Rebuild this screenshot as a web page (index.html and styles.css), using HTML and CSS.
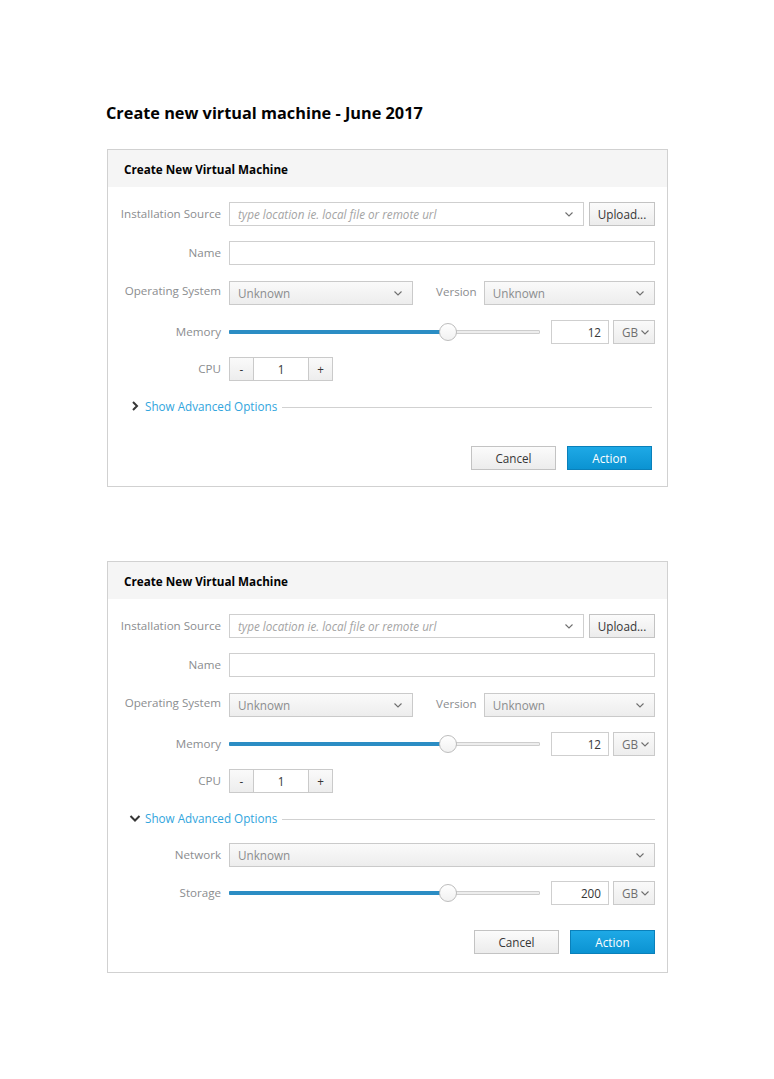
FILE: index.html
```html
<!DOCTYPE html>
<html lang="en">
<head>
<meta charset="utf-8">
<title>Create new virtual machine</title>
<link rel="stylesheet" href="styles.css">
</head>
<body>
<main class="page">
  <h1 class="page-title">Create new virtual machine - June 2017</h1>

  <section class="card card--collapsed">
    <header class="card-head"><h2 class="card-title">Create New Virtual Machine</h2></header>
    <div class="card-body">
      <div class="form">
        <div class="row">
          <span class="lbl">Installation Source</span>
          <div class="ctl split">
            <div class="field combo"><span class="ph">type location ie. local file or remote url</span><svg class="chev" viewBox="0 0 8 5" width="8" height="5"><polyline points="0.5,0.5 4,4 7.5,0.5"/></svg></div>
            <span class="btn btn-upload">Upload...</span>
          </div>
        </div>
        <div class="row">
          <span class="lbl">Name</span>
          <div class="ctl"><div class="field"></div></div>
        </div>
        <div class="row row-os">
          <span class="lbl lbl-up">Operating System</span>
          <div class="ctl os">
            <div class="select sel-os"><span>Unknown</span><svg class="chev" viewBox="0 0 8 5" width="8" height="5"><polyline points="0.5,0.5 4,4 7.5,0.5"/></svg></div>
            <span class="lbl lbl-version">Version</span>
            <div class="select sel-ver"><span>Unknown</span><svg class="chev" viewBox="0 0 8 5" width="8" height="5"><polyline points="0.5,0.5 4,4 7.5,0.5"/></svg></div>
          </div>
        </div>
        <div class="row">
          <span class="lbl">Memory</span>
          <div class="ctl size">
            <div class="slider"><div class="track"></div><div class="fill" style="width:70%"></div><div class="thumb" style="left:70%"></div></div>
            <div class="field num">12</div>
            <div class="select unit"><span>GB</span><svg class="chev" viewBox="0 0 8 5" width="8" height="5"><polyline points="0.5,0.5 4,4 7.5,0.5"/></svg></div>
          </div>
        </div>
        <div class="row row-cpu">
          <span class="lbl">CPU</span>
          <div class="ctl">
            <div class="spin"><span class="spin-btn">-</span><span class="spin-val">1</span><span class="spin-btn">+</span></div>
          </div>
        </div>
      </div>
      <div class="adv">
        <svg class="adv-icon" viewBox="0 0 12 12" width="12" height="12"><polyline points="4,2 8,6 4,10"/></svg>
        <span class="adv-link">Show Advanced Options</span>
        <span class="adv-line"></span>
      </div>
      <div class="footer">
        <span class="btn btn-cancel">Cancel</span>
        <span class="btn btn-primary">Action</span>
      </div>
    </div>
  </section>

  <section class="card card--expanded">
    <header class="card-head"><h2 class="card-title">Create New Virtual Machine</h2></header>
    <div class="card-body">
      <div class="form">
        <div class="row">
          <span class="lbl">Installation Source</span>
          <div class="ctl split">
            <div class="field combo"><span class="ph">type location ie. local file or remote url</span><svg class="chev" viewBox="0 0 8 5" width="8" height="5"><polyline points="0.5,0.5 4,4 7.5,0.5"/></svg></div>
            <span class="btn btn-upload">Upload...</span>
          </div>
        </div>
        <div class="row">
          <span class="lbl">Name</span>
          <div class="ctl"><div class="field"></div></div>
        </div>
        <div class="row row-os">
          <span class="lbl lbl-up">Operating System</span>
          <div class="ctl os">
            <div class="select sel-os"><span>Unknown</span><svg class="chev" viewBox="0 0 8 5" width="8" height="5"><polyline points="0.5,0.5 4,4 7.5,0.5"/></svg></div>
            <span class="lbl lbl-version">Version</span>
            <div class="select sel-ver"><span>Unknown</span><svg class="chev" viewBox="0 0 8 5" width="8" height="5"><polyline points="0.5,0.5 4,4 7.5,0.5"/></svg></div>
          </div>
        </div>
        <div class="row">
          <span class="lbl">Memory</span>
          <div class="ctl size">
            <div class="slider"><div class="track"></div><div class="fill" style="width:70%"></div><div class="thumb" style="left:70%"></div></div>
            <div class="field num">12</div>
            <div class="select unit"><span>GB</span><svg class="chev" viewBox="0 0 8 5" width="8" height="5"><polyline points="0.5,0.5 4,4 7.5,0.5"/></svg></div>
          </div>
        </div>
        <div class="row row-cpu">
          <span class="lbl">CPU</span>
          <div class="ctl">
            <div class="spin"><span class="spin-btn">-</span><span class="spin-val">1</span><span class="spin-btn">+</span></div>
          </div>
        </div>
      </div>
      <div class="adv">
        <svg class="adv-icon" viewBox="0 0 12 12" width="12" height="12"><polyline points="1.5,4 6,8.5 10.5,4"/></svg>
        <span class="adv-link">Show Advanced Options</span>
        <span class="adv-line"></span>
      </div>
      <div class="form form-adv">
        <div class="row">
          <span class="lbl">Network</span>
          <div class="ctl">
            <div class="select"><span>Unknown</span><svg class="chev" viewBox="0 0 8 5" width="8" height="5"><polyline points="0.5,0.5 4,4 7.5,0.5"/></svg></div>
          </div>
        </div>
        <div class="row">
          <span class="lbl">Storage</span>
          <div class="ctl size">
            <div class="slider"><div class="track"></div><div class="fill" style="width:70%"></div><div class="thumb" style="left:70%"></div></div>
            <div class="field num">200</div>
            <div class="select unit"><span>GB</span><svg class="chev" viewBox="0 0 8 5" width="8" height="5"><polyline points="0.5,0.5 4,4 7.5,0.5"/></svg></div>
          </div>
        </div>
      </div>
      <div class="footer">
        <span class="btn btn-cancel">Cancel</span>
        <span class="btn btn-primary">Action</span>
      </div>
    </div>
  </section>
</main>
</body>
</html>
```

FILE: styles.css
```css
* { box-sizing: border-box; }

html, body {
  margin: 0;
  padding: 0;
  background: #ffffff;
}

body {
  font-family: "Open Sans", "Liberation Sans", sans-serif;
  color: #363636;
}

.page {
  padding: 102px 0 40px 106px;
}

.page-title {
  margin: 0 0 25px 0;
  font-size: 16.3px;
  line-height: 22px;
  font-weight: 700;
  color: #030303;
}

.card {
  width: 561px;
  margin-left: 1px;
  border: 1px solid #d1d1d1;
  background: #fff;
}

.card + .card {
  margin-top: 74px;
}

.card-head {
  height: 37px;
  background: #f5f5f5;
  display: flex;
  align-items: center;
  padding: 1px 0 0 16px;
}

.card-title {
  margin: 0;
  font-size: 11.7px;
  font-weight: 700;
  color: #030303;
  line-height: 16px;
}

.card-body {
  padding: 15px 12px 16px 0;
}

.form {
  display: flex;
  flex-direction: column;
  gap: 15px;
}

.row {
  display: grid;
  grid-template-columns: 113px 1fr;
  column-gap: 8px;
  align-items: center;
  height: 24px;
}

.row-os {
  margin-top: 1px;
}

.row-cpu {
  margin-top: -2px;
}

.lbl {
  text-align: right;
  font-size: 11.6px;
  line-height: 16px;
  color: #8b8d8f;
  white-space: nowrap;
}

.lbl-up {
  position: relative;
  top: -2px;
}

.ctl {
  display: flex;
  align-items: center;
  height: 24px;
}

.split {
  gap: 5px;
}

.field {
  height: 24px;
  flex: 1;
  border: 1px solid #cfcfcf;
  background: #fff;
  display: flex;
  align-items: center;
  padding: 0 8px;
  font-size: 11.7px;
  color: #363636;
}

.combo {
  justify-content: space-between;
  padding-right: 10px;
}

.ph {
  font-style: italic;
  color: #a4a4a4;
}

.chev {
  fill: none;
  stroke: #6f6f6f;
  stroke-width: 1.1;
  flex: none;
}

.btn {
  height: 24px;
  display: inline-flex;
  align-items: center;
  justify-content: center;
  font-size: 11.7px;
  border: 1px solid #c3c3c3;
  background: linear-gradient(#fbfbfb, #ececec);
  color: #363636;
  white-space: nowrap;
}

.btn-upload {
  width: 66px;
  flex: none;
}

.select {
  height: 24px;
  flex: 1;
  display: flex;
  align-items: center;
  justify-content: space-between;
  border: 1px solid #cacaca;
  background: linear-gradient(#fafafa, #ededed);
  padding: 0 10px 0 8px;
  font-size: 11.7px;
  color: #8b8d8f;
}

.sel-os {
  flex: none;
  width: 184px;
}

.lbl-version {
  flex: none;
  margin: 0 7px 0 23px;
  position: relative;
  top: -1px;
}

.sel-ver {
  flex: 1;
}

.size {
  gap: 4px;
}

.slider {
  position: relative;
  flex: none;
  width: 311px;
  height: 24px;
  margin-right: 7px;
}

.track {
  position: absolute;
  left: 0;
  right: 0;
  top: 10px;
  height: 4px;
  background: #ededed;
  border: 1px solid #cdcdcd;
  border-radius: 1px;
}

.fill {
  position: absolute;
  left: 0;
  top: 10px;
  height: 4px;
  background: #2b8dc4;
  border-radius: 1px;
}

.thumb {
  position: absolute;
  top: 3px;
  width: 18px;
  height: 18px;
  margin-left: -8px;
  border-radius: 50%;
  border: 1px solid #bdbdbd;
  background: linear-gradient(#ffffff, #f1f1f1);
}

.num {
  flex: none;
  width: 58px;
  justify-content: flex-end;
  padding-right: 7px;
}

.unit {
  flex: 1;
  padding: 0 5px 0 8px;
  color: #6f6f6f;
}

.spin {
  display: flex;
  height: 24px;
  border: 1px solid #cacaca;
}

.spin-btn {
  width: 23px;
  display: flex;
  align-items: center;
  justify-content: center;
  background: linear-gradient(#fafafa, #ededed);
  font-size: 11.7px;
  color: #363636;
}

.spin-val {
  width: 56px;
  display: flex;
  align-items: center;
  justify-content: center;
  border-left: 1px solid #cacaca;
  border-right: 1px solid #cacaca;
  font-size: 11.7px;
  color: #363636;
  background: #fff;
}

.adv {
  display: flex;
  align-items: center;
  height: 16px;
  margin-top: 17px;
  padding-left: 21px;
}

.adv-icon {
  flex: none;
  fill: none;
  stroke: #363636;
  stroke-width: 2;
  margin-right: 4px;
}

.adv-link {
  font-size: 11.7px;
  line-height: 16px;
  color: #31a5dd;
  white-space: nowrap;
}

.adv-line {
  flex: 1;
  height: 1px;
  background: #d1d1d1;
  margin-left: 5px;
  margin-top: 3px;
}

.footer {
  display: flex;
  justify-content: flex-end;
  gap: 11px;
  margin-top: 32px;
}

.btn-cancel,
.btn-primary {
  width: 85px;
}

.btn-primary {
  border: 1px solid #0a80ba;
  background: linear-gradient(#1ea9e6, #0b93d2);
  color: #fff;
}

.card--collapsed .adv {
  margin-right: 3px;
}

.card--collapsed .footer {
  margin-right: 3px;
}

.card--expanded .form-adv {
  margin-top: 17px;
  gap: 14px;
}

.card--expanded .footer {
  margin-top: 25px;
}

.card--expanded .card-body {
  padding-bottom: 18px;
}
```
